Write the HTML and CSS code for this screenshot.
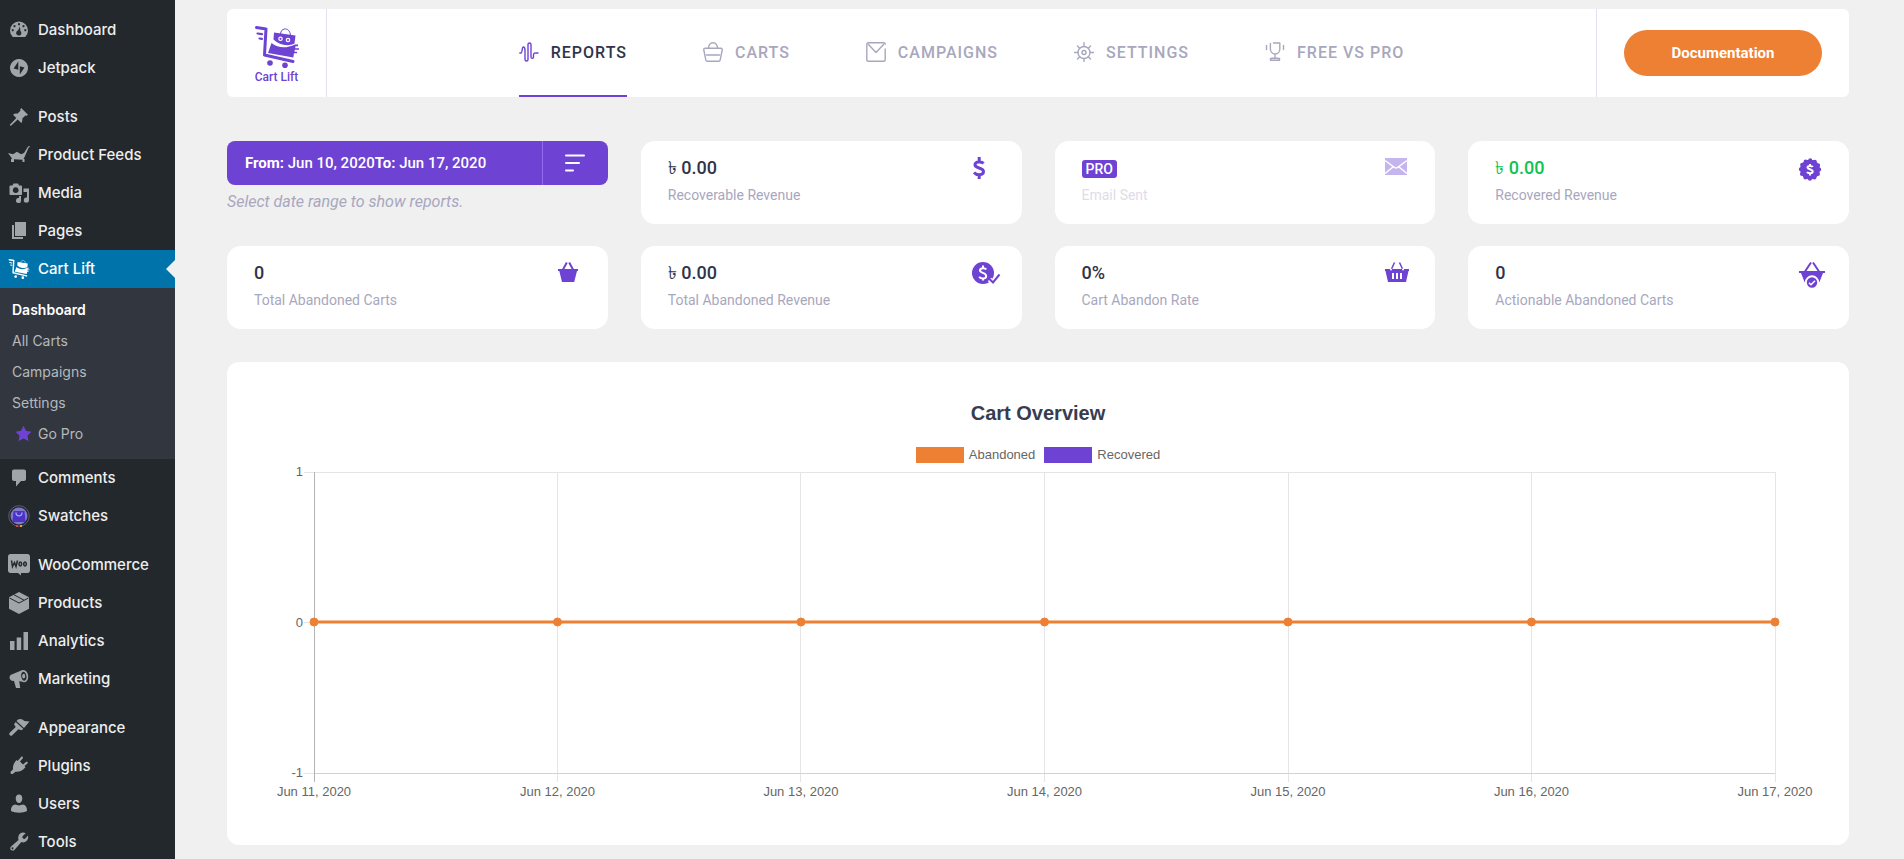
FILE: index.html
```html
<!DOCTYPE html>
<html lang="en">
<head>
<meta charset="utf-8">
<title>Cart Lift – Reports</title>
<link rel="stylesheet" href="styles.css">
</head>
<body>
<div class="layout">
<nav class="sidebar" aria-label="Admin menu">
<ul class="menu">
<li><a class="menu-link" href="#"><svg class="menu-icon" viewBox="0 0 20 20"><path fill-rule="evenodd" d="M3.800 17A9 9 0 1 1 16.200 17ZM10 3a1.100 1.100 0 1 0 .01 0ZM5.500 5a1.100 1.100 0 1 0 .01 0ZM14.500 5a1.100 1.100 0 1 0 .01 0ZM3.700 9a1.100 1.100 0 1 0 .01 0ZM16.300 9a1.100 1.100 0 1 0 .01 0ZM11 6.500 9 10.500a2.600 2.600 0 1 0 2.300.4Z"/></svg>Dashboard</a></li>
<li><a class="menu-link" href="#"><svg class="menu-icon" viewBox="0 0 20 20"><path fill-rule="evenodd" d="M10 1a9 9 0 1 0 .01 0ZM9.300 3.500v8.200L4.600 10.500ZM10.800 16.500V8.200l4.700 1.200Z"/></svg>Jetpack</a></li>
<li class="gap"><a class="menu-link" href="#"><svg class="menu-icon" viewBox="0 0 20 20"><path d="M12.200 1 19 7.800l-1.200 1-1.300-.4-3.200 3.200c.3 1.600 0 3.200-1 4.400L8.700 12.500 2 18.800l-1-.2-.1-.9L7.300 11 4 7.700c1.200-1 2.800-1.300 4.400-1L11.600 3.500 11.200 2.200Z"/></svg>Posts</a></li>
<li><a class="menu-link" href="#"><svg class="menu-icon" viewBox="0 0 22 20"><path d="M0 8 5 9.200 9 6.800 13 9.200l3-1.200L20 1.500l2-.5-.3 1.100-1 .4-4 9.200-1.200 2.300h1v3h-2v-2.300L6 14.200V17H3v-2.500l1-1Z"/></svg>Product Feeds</a></li>
<li><a class="menu-link" href="#"><svg class="menu-icon" viewBox="0 0 20 20"><path fill-rule="evenodd" d="M1.500 2.500h2L4.500.5h4.500l1 2h2c.6 0 1 .4 1 1V11c0 .6-.4 1-1 1H1.500c-.6 0-1-.4-1-1V3.500c0-.6.4-1 1-1ZM6.700 4.300a2.900 2.900 0 1 0 .01 0Z"/><path d="M14.500 5.500H20v11.500a2.600 2.600 0 1 1-2-2.500V9h-3.500ZM12 13v4.500a2.500 2.500 0 1 1-2-2.400V13Z"/></svg>Media</a></li>
<li><a class="menu-link" href="#"><svg class="menu-icon" viewBox="0 0 20 20"><path d="M6 1h11v14H6ZM3 4h2v12h9v2H3Z"/></svg>Pages</a></li>
<li><a class="menu-link current" href="#" aria-current="page"><svg class="menu-icon" viewBox="0 0 44 42"><use href="#trolley"/></svg>Cart Lift</a>
<ul class="submenu">
<li><a class="sub-link active" href="#">Dashboard</a></li>
<li><a class="sub-link" href="#">All Carts</a></li>
<li><a class="sub-link" href="#">Campaigns</a></li>
<li><a class="sub-link" href="#">Settings</a></li>
<li><a class="sub-link" href="#"><svg class="star" viewBox="0 0 20 20"><path d="m10 1 2.900 5.900 6.500.9-4.700 4.600 1.100 6.500L10 15.800l-5.800 3.100 1.100-6.500L.6 7.800l6.500-.9Z"/></svg>Go Pro</a></li>
</ul></li>
<li><a class="menu-link" href="#"><svg class="menu-icon" viewBox="0 0 20 20"><path d="M5 1.500h10c1.100 0 2 .9 2 2V11c0 1.100-.9 2-2 2h-3l-5 5.500V13H5c-1.100 0-2-.9-2-2V3.500c0-1.100.9-2 2-2Z"/></svg>Comments</a></li>
<li><a class="menu-link" href="#"><svg class="menu-icon" viewBox="0 0 20 20"><circle cx="10" cy="10" r="10.300" fill="#23282d" stroke="#5c5c72"/><circle cx="10" cy="10" r="8.500" fill="#8178c8"/><path fill="#4a34c6" d="M4.500 5h11l1 11h-13Z"/><path fill="none" stroke="#a9a2f0" stroke-width="1.300" d="M7 6.500c0 4.500 6 4.500 6 0"/><path fill="#e23c4c" d="M7 19h2v2H7Z"/><path fill="#e5a629" d="M11 19h2v2h-2Z"/></svg>Swatches</a></li>
<li class="gap"><a class="menu-link" href="#"><svg class="menu-icon" viewBox="0 0 22 20"><path d="M2.500-1h17C21-1 22 0 22 1.500v14c0 1.500-1 2.500-2.500 2.500H13v2.500L10 18H2.500C1 18 0 17 0 15.500v-14C0 0 1-1 2.500-1Z"/><path fill="none" stroke="#23282d" stroke-width="1.500" d="m3.500 5.500 1 6 2-4 1.500 4 1.500-6M12.300 7a1.300 2 0 1 0 .01 0M17 7a1.300 2 0 1 0 .01 0"/></svg>WooCommerce</a></li>
<li><a class="menu-link" href="#"><svg class="menu-icon" viewBox="0 0 20 20"><path d="m10-1 10 5.200v11.500L10 21 0 15.700V4.200Z"/><path fill="none" stroke="#23282d" d="m.5 5 9.500 5 9.500-5M5 1.800l10 5.400"/></svg>Products</a></li>
<li><a class="menu-link" href="#"><svg class="menu-icon" viewBox="0 0 20 20"><path d="M1 10h4.500v9H1ZM7.700 6.500h4.500V19H7.700ZM14.500 1H19v18h-4.500Z"/></svg>Analytics</a></li>
<li><a class="menu-link" href="#"><svg class="menu-icon" viewBox="0 0 20 20"><path fill-rule="evenodd" d="M13.500 1c3.500-.5 6 3.200 5.700 7.200-.3 4.300-3.500 6.300-5.700 4.500l-3.300-.4 1 6.700H7l-2-7-2.300-.2C-.2 9.800.1 7.200 2 5.700ZM14 2.700c-1.500.6-2 2.500-1.800 4.600.3 2.400 1.600 4.500 3.200 4.500 1.500-.3 2.300-2.200 2.100-4.500-.3-2.600-1.800-4.600-3.500-4.600Z"/><ellipse cx="14.700" cy="7.200" rx="1.500" ry="2.400"/></svg>Marketing</a></li>
<li class="gap"><a class="menu-link" href="#"><svg class="menu-icon" viewBox="0 0 20 20"><path d="M11 1c2 0 3 .8 4.500 2l5 .5-5.500 6.500L7.500 3C8.500 1.700 9.500 1 11 1ZM6.700 4l7.700 7-2 1.200-3-1L3 17.500c-2 .8-3.300-1-2.500-2.500L6.700 9 5 6.200Z"/></svg>Appearance</a></li>
<li><a class="menu-link" href="#"><svg class="menu-icon" viewBox="0 0 20 20"><path d="M12.300.8c.9-.6 2 .4 1.500 1.400L11 5.500l3 3 3.200-2.700c1-.5 2 .6 1.500 1.500l-3.200 2.800 1 1.100c-3 3.500-6.500 5-10 4.500L4.300 17.500c-1.500 1.500-3.500-.3-2.500-2L4 13.500c-.4-3.500 1-7 3.500-9.500l1.100.9Z"/></svg>Plugins</a></li>
<li><a class="menu-link" href="#"><svg class="menu-icon" viewBox="0 0 20 20"><path d="M10 .5c2 0 3.300 1.600 3.300 4S11.800 9 10 9 6.700 6.900 6.700 4.500 8 .5 10 .5ZM6 10.500l4 1 4-1c3 .8 4.200 3 4 6.500-4 2.300-12 2.300-16 0-.2-3.500 1-5.700 4-6.500Z"/></svg>Users</a></li>
<li><a class="menu-link" href="#"><svg class="menu-icon" viewBox="0 0 20 20"><path fill-rule="evenodd" d="M16.700 1.200 13.300 4.500l.5 2 2 .5 3.200-3.400c.7 3-.8 6-3.600 6.700-1 .2-2 .1-3-.2l-7 7.800c-2 2-5.500-.8-3.600-3.200L9.500 8c-.9-3.200.6-7.400 4.500-7.500.9 0 1.800.2 2.700.7ZM3.500 15.300a1 1 0 1 0 .01 0Z"/></svg>Tools</a></li>
</ul>
</nav>

<main class="content">
<header class="topbar">
<a class="brand" href="#">
<svg class="brand-mark" viewBox="0 0 44 42"><g id="trolley"><path fill="none" stroke="currentColor" stroke-width="3" stroke-linecap="round" stroke-linejoin="round" d="M1.500 1.500 11 3 9.500 29l28.500 6.500"/><path fill="none" stroke="currentColor" stroke-width="2.200" stroke-linecap="round" d="M2.500 7.500l4.500.7M4.500 12.500l2.500.4"/><path fill="none" stroke="currentColor" stroke-width="1" d="M25.500 8c.5-7 9.500-7 10 1.500"/><path fill="currentColor" d="m19 6.500 21.500 3-1 8c-6 3-15 2-21-4ZM16.500 17c7 5.500 15 5.500 23.500 1.500h3v1.700h-2.500l-.3 2H44v1.500h-4.200l-.3 2H42v1.500h-3l-.7 4.300L13 27Z"/><circle cx="25.500" cy="12.800" r="1.700" fill="none" stroke="#fff" stroke-width="1.200"/><circle cx="33" cy="14" r="1.700" fill="none" stroke="#fff" stroke-width="1.200"/><circle cx="15" cy="37" r="2.800" fill="currentColor"/><circle cx="30" cy="39.200" r="2.800" fill="currentColor"/></g></svg>
<span>Cart Lift</span>
</a>
<nav class="tabs" aria-label="Sections">
<a class="tab selected" href="#"><svg class="tab-icon" viewBox="0 0 20 20"><path d="M.8 11H2c1.500 0 .8-6 2.300-6S6 6.500 6 8.500v9c0 2 3 2 3 0v-15c0-2 3-2 3 0v12.500c0 1.800 2.500 1.800 2.500 0V13c0-2.300 1.500-2 4.500-2"/></svg>REPORTS</a>
<a class="tab" href="#"><svg class="tab-icon" viewBox="0 0 20 20"><path d="M2.200 6.300h15.600c1.200 0 1.600.8 1.400 1.700l-2 9.800c-.2 1-.8 1.400-1.700 1.400h-11c-1 0-1.500-.5-1.700-1.400L.8 8c-.2-1 .3-1.700 1.400-1.700ZM3.500 13h13M5.500 6.300C5.500 3 7 .8 10 .8s4.500 2.200 4.500 5.500"/></svg>CARTS</a>
<a class="tab" href="#"><svg class="tab-icon" viewBox="0 0 20 20"><path d="M19.200 7v10.700c0 1-.5 1.500-1.500 1.500H2.300c-1 0-1.500-.5-1.500-1.500V2.300c0-1 .5-1.500 1.500-1.500h15.400c1 0 1.500.5 1.500 1.500M2.500 2.500l7.500 8 7.500-8"/></svg>CAMPAIGNS</a>
<a class="tab" href="#"><svg class="tab-icon" viewBox="0 0 20 20"><circle cx="10" cy="10.500" r="6"/><circle cx="10" cy="10.500" r="2"/><path d="M10 .8v3.700m0 12v3.200M.5 10.500H4m12 0h3.500M3.500 4l2.200 2.200m8.600 8.600 2.200 2.200m0-13-2.200 2.200m-8.600 8.600L3.500 17"/></svg>SETTINGS</a>
<a class="tab" href="#"><svg class="tab-icon" viewBox="0 0 20 20"><path d="M8.500 1h6.300v6c0 3-2 5-4.600 5s-4.800-2-4.800-5V1.500M1.500 3.500v4M18.500 3.500v4M10 12v4M5.500 18.300h9M5.500 18v-1.500L10 16l4.500.5V18"/></svg>FREE VS PRO</a>
</nav>
<div class="docs"><a class="docs-button" href="#">Documentation</a></div>
</header>

<section class="cards" aria-label="Report figures">
<div class="range">
<button class="range-button" type="button">
<span class="range-text"><b>From:</b> Jun 10, 2020<b>To:</b> Jun 17, 2020</span>
<span class="range-filter"><svg width="20" height="18" viewBox="0 0 20 18"><path d="M1 1.500h18M1 9h13M1 16.500h7"/></svg></span>
</button>
<p class="hint">Select date range to show reports.</p>
</div>
<article class="card"><div><p class="value">৳ 0.00</p><p class="label">Recoverable Revenue</p></div><svg class="card-icon" viewBox="0 0 28 28"><path class="line thick" d="M11.500 6.500C10 4.600 3.300 4.200 3 7.700c-.2 4 8.500 2.500 8.500 6.800 0 4-7 4-9.500 1M7.200 0v4.500m0 13V22"/></svg></article>
<article class="card muted"><div><p class="value"><span class="pro">PRO</span></p><p class="label">Email Sent</p></div><svg class="card-icon" viewBox="0 0 28 28"><path d="M0 1h22v17H0Z"/><path class="line white thinner" d="m0 3.500 8.500 6.200c1.500 1.600 3.500 1.600 5 0L22 3.500M0 16.500 8 10m14 6.500L14 10"/></svg></article>
<article class="card good"><div><p class="value">৳ 0.00</p><p class="label">Recovered Revenue</p></div><svg class="card-icon" viewBox="0 0 28 28"><circle cx="11" cy="12.500" r="10"/><circle class="dots" cx="11" cy="12.500" r="9.200"/><path class="line white" d="M13.700 10C13 8.500 8.500 8.500 8.500 10.500s5.200 1.500 5.200 4-4.700 2.200-5.700.5M11 7v2m0 7.500v2"/></svg></article>
<article class="card"><div><p class="value">0</p><p class="label">Total Abandoned Carts</p></div><svg class="card-icon" viewBox="0 0 28 28"><path d="M0 7h20v2h-1l-2.800 11H4L1.300 9H0Z"/><path class="line" d="M5 7.500 8.800.5M15 7.500 11.200.5"/></svg></article>
<article class="card"><div><p class="value">৳ 0.00</p><p class="label">Total Abandoned Revenue</p></div><svg class="card-icon" viewBox="0 0 28 28"><circle cx="11" cy="11" r="11"/><path class="line white" d="M14.200 7.500C13 5.500 8 5.800 8 8.500s6.200 2 6.200 5.500-5.500 3-7 .8M11 3.500v3m0 9v3"/><path class="line halo" d="m17.500 17.500 3.500 3.300 6-8"/><path class="line" d="m17.500 17 3.500 3.500 6.500-8"/></svg></article>
<article class="card"><div><p class="value">0%</p><p class="label">Cart Abandon Rate</p></div><svg class="card-icon" viewBox="0 0 28 28"><path d="M0 7h24v2h-.5L21 20H3L.5 9H0Z"/><path class="line thinner" d="M6 8 9.500.5M18 8 14.500.5"/><circle class="white-dot" cx="6" cy="7.500" r="1"/><circle class="white-dot" cx="18" cy="7.500" r="1"/><path class="line white" d="M8 11v6m4-6v6m4-6v6"/></svg></article>
<article class="card"><div><p class="value">0</p><p class="label">Actionable Abandoned Carts</p></div><svg class="card-icon" viewBox="0 0 28 28"><path d="M0 9h26v2h-2l-3.500 9h-15L2 11H0Z"/><path class="line" d="M6 9.500 12 .5M20 9.500 14 .5"/><circle class="ring" cx="13" cy="20.500" r="6.200"/><path class="line white thinner" d="m10 20.800 2 2 4-4"/></svg></article>
</section>

<section class="chart">
<h2>Cart Overview</h2>
<div class="legend"><span class="key"><i class="swatch orange"></i>Abandoned</span><span class="key"><i class="swatch purple"></i>Recovered</span></div>
<div class="plot-area">
<svg class="plot" role="img" aria-label="Abandoned and recovered carts, Jun 11 to Jun 17, 2020">
<g class="grid">
<line x1="-10" y1="1" x2="100%" y2="1"/>
<line x1="-10" y1="151" x2="100%" y2="151"/>
<line x1="-10" y1="302" x2="0" y2="302"/>
<line x1="16.667%" y1="1" x2="16.667%" y2="311"/><line x1="33.333%" y1="1" x2="33.333%" y2="311"/><line x1="50%" y1="1" x2="50%" y2="311"/><line x1="66.667%" y1="1" x2="66.667%" y2="311"/><line x1="83.333%" y1="1" x2="83.333%" y2="311"/><line x1="100%" y1="1" x2="100%" y2="311"/>
<line class="base" x1="0" y1="302" x2="100%" y2="302"/>
<line class="axis" x1="0" y1="1" x2="0" y2="311"/>
</g>
<g class="series"><line x1="0" y1="151" x2="100%" y2="151"/><circle cx="0" cy="151" r="4"/><circle cx="16.667%" cy="151" r="4"/><circle cx="33.333%" cy="151" r="4"/><circle cx="50%" cy="151" r="4"/><circle cx="66.667%" cy="151" r="4"/><circle cx="83.333%" cy="151" r="4"/><circle cx="100%" cy="151" r="4"/></g>
<g class="y-text"><text x="-11" y="5">1</text><text x="-11" y="156">0</text><text x="-11" y="306">-1</text></g>
<g class="x-text"><text x="0" y="325">Jun 11, 2020</text><text x="16.667%" y="325">Jun 12, 2020</text><text x="33.333%" y="325">Jun 13, 2020</text><text x="50%" y="325">Jun 14, 2020</text><text x="66.667%" y="325">Jun 15, 2020</text><text x="83.333%" y="325">Jun 16, 2020</text><text x="100%" y="325">Jun 17, 2020</text></g>
</svg>
</div>
</section>
</main>
</div>
</body>
</html>
```
FILE: styles.css
```css
* { box-sizing: border-box; }
body { margin: 0; background: #f0f0f0; font-family: Roboto, sans-serif; color: #2f3449; }
a { color: inherit; text-decoration: none; }
ul { list-style: none; margin: 0; padding: 0; }
p, h2 { margin: 0; }
.layout { display: flex; min-height: 100vh; }

.sidebar { flex: 0 0 175px; position: sticky; top: 0; height: 100vh; overflow: hidden; background: #23282d; padding-top: 11px; font: 500 15px/20px Inter, sans-serif; color: #eee; }
.menu-link { display: flex; align-items: center; gap: 8px; height: 38px; padding-left: 8px; }
.menu .gap { margin-top: 11px; }
.menu-icon { width: 22px; height: 20px; fill: #a0a5aa; overflow: visible; flex: none; }
.current { background: #0073aa; color: #fff; position: relative; }
.current::after { content: ""; position: absolute; right: 0; top: 10px; border: 9px solid transparent; border-left-width: 0; border-right-color: #f0f0f0; }
.submenu { background: #32373f; padding: 6px 0 10px; }
.sub-link { display: flex; align-items: center; gap: 6px; height: 31px; padding-left: 12px; font-size: 14px; font-weight: 400; color: #b4b9be; }
.sub-link.active { color: #fff; font-weight: 600; }
.star { width: 17px; height: 17px; fill: #6e42d3; margin-left: 3px; }

.content { flex: 1; min-width: 0; padding: 9px 55px 13px 52px; }
.topbar { display: flex; background: #fff; border-radius: 6px; height: 88px; }
.brand { width: 100px; border-right: 1px solid #e3e1f1; display: flex; flex-direction: column; align-items: center; padding-top: 17px; color: #6e42d3; font: 500 12px/18px Roboto, sans-serif; }
.brand-mark { width: 44px; height: 42px; overflow: visible; }
.tabs { flex: 1; display: flex; justify-content: center; gap: 76px; }
.tab { display: flex; align-items: center; gap: 12px; font-size: 16px; font-weight: 500; letter-spacing: 1px; color: #a8a7be; border-bottom: 2px solid transparent; }
.tab.selected { color: #2f3449; border-color: #6e42d3; }
.tab-icon { width: 20px; height: 20px; fill: none; stroke: #a8a7be; stroke-width: 1.4; stroke-linecap: round; stroke-linejoin: round; }
.selected .tab-icon { stroke: #6e42d3; }
.docs { border-left: 1px solid #e3e1f1; padding: 0 27px; display: flex; align-items: center; }
.docs-button { width: 198px; height: 46px; border-radius: 23px; background: #ee8033; color: #fff; font-size: 15px; font-weight: 700; line-height: 46px; text-align: center; }

.cards { display: grid; grid-template-columns: repeat(4, 1fr); gap: 22px 33px; margin-top: 44px; }
.range-button { display: flex; width: 100%; height: 44px; border: 0; border-radius: 8px; padding: 0; background: #6e42d3; color: #fff; font: 500 15px/44px Roboto, sans-serif; text-align: left; }
.range-text { flex: 1; padding-left: 18px; }
.range-text b { font-weight: 700; }
.range-filter { width: 66px; height: 44px; border-left: 1px solid #9168ee; display: flex; align-items: center; justify-content: center; }
.range-filter svg { fill: none; stroke: #fff; stroke-width: 2; stroke-linecap: round; }
.hint { margin-top: 7px; font-size: 16px; line-height: 20px; font-style: italic; color: #a8a7be; }
.card { display: flex; justify-content: space-between; background: #fff; border-radius: 14px; height: 83px; padding: 16px 22px 0 27px; }
.value { font-size: 18px; font-weight: 500; line-height: 22px; }
.label { margin-top: 6px; font-size: 14px; line-height: 20px; color: #a8a7be; }
.good .value { color: #0ec254; }
.pro { display: inline-block; background: #6e42d3; color: #fff; border-radius: 3px; font-size: 14px; line-height: 18px; padding: 0 4px; }
.muted .label { color: #dedde7; }
.card-icon { width: 28px; height: 28px; fill: #6e42d3; flex: none; overflow: visible; }
.muted .card-icon { fill: #c5b5ef; }
.line { fill: none; stroke: #6e42d3; stroke-width: 2; }
.thick { stroke-width: 3; }
.thinner { stroke-width: 1.5; }
.white { stroke: #fff; }
.halo { stroke: #fff; stroke-width: 5; }
.white-dot { fill: #fff; }
.dots { fill: none; stroke: #6e42d3; stroke-width: 4; stroke-linecap: round; stroke-dasharray: 0 4.817; }
.ring { stroke: #fff; stroke-width: 2; }

.chart { background: #fff; border-radius: 12px; margin-top: 33px; padding: 39px 0 48px; font-family: "Liberation Sans", Arial, sans-serif; }
.chart h2 { font-size: 20px; line-height: 24px; text-align: center; color: #373c50; }
.legend { display: flex; justify-content: center; gap: 9px; margin-top: 22px; font-size: 13px; line-height: 16px; color: #666; }
.key { display: flex; gap: 5px; }
.swatch { width: 48px; height: 16px; }
.orange { background: #ee8033; }
.purple { background: #6e42d3; }
.plot-area { padding: 8px 74px 0 87px; }
.plot { display: block; width: 100%; height: 326px; overflow: visible; font-size: 13px; fill: #666; }
.grid line { stroke: #e5e5e5; stroke-width: 1; shape-rendering: crispEdges; }
.grid .base { stroke: #d2d2d2; }
.grid .axis { stroke: #b4b4b4; }
.series { fill: #ee8033; stroke: #ee8033; }
.series line { stroke-width: 3; }
.y-text { text-anchor: end; }
.x-text { text-anchor: middle; }
```
